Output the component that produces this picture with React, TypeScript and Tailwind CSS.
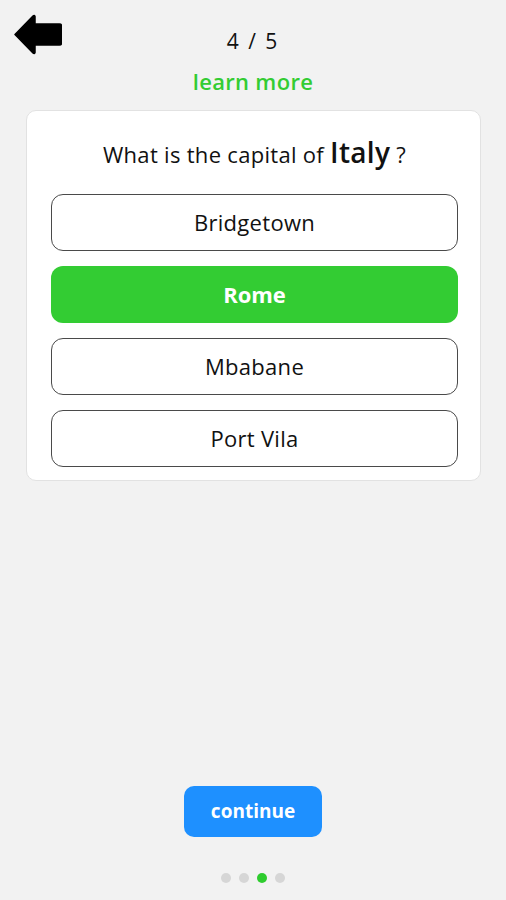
import React from "react";

const options = ["Bridgetown", "Rome", "Mbabane", "Port Vila"];
const correct = "Rome";

function BackArrow() {
  return (
    <svg width="48" height="41" viewBox="0 0 48 41" aria-hidden>
      <path
        d="M1 20.5 L19 2 Q20.5 0.8 21 2.5 L21 10 L45.5 10 Q47.5 10 47.5 12 L47.5 29 Q47.5 31 45.5 31 L21 31 L21 38.5 Q20.5 40.2 19 39 Z"
        fill="#000"
        stroke="#000"
        strokeWidth="1.5"
        strokeLinejoin="round"
      />
    </svg>
  );
}

export default function App() {
  return (
    <div
      className="flex h-[900px] w-full flex-col bg-[#f2f2f2] text-[#111]"
      style={{ fontFamily: '"Open Sans", "Lato", sans-serif' }}
    >
      {/* Header */}
      <div className="grid grid-cols-[1fr_auto_1fr] items-start px-[14px] pt-[14px]">
        <button className="justify-self-start">
          <BackArrow />
        </button>
        <div className="flex flex-col items-center">
          <span className="mt-[13px] text-[21px] leading-[28px] tracking-[2px]">4 / 5</span>
          <a href="#" className="mt-[13px] text-[22px] leading-[26px] font-semibold tracking-[0.3px] text-[#33cc33]">
            learn more
          </a>
        </div>
        <div />
      </div>

      {/* Card */}
      <div className="ml-[26px] mr-[25px] mt-[16px] rounded-[10px] border border-[#e2e2e2] bg-white pb-[13px] pl-[24px] pr-[22px] pt-[24px]">
        <p className="text-center text-[22px] leading-[34px] tracking-[0.3px]">
          What is the capital of <span className="text-[28px] font-semibold">Italy</span> ?
        </p>
        <div className="mt-[23px] flex flex-col gap-[15px]">
          {options.map((o) =>
            o === correct ? (
              <button
                key={o}
                className="h-[57px] rounded-[12px] bg-[#33cc33] text-[22px] font-bold text-white"
              >
                {o}
              </button>
            ) : (
              <button
                key={o}
                className="h-[57px] rounded-[12px] border border-[#4a4a4a] bg-white text-[22px] tracking-[0.3px]"
              >
                {o}
              </button>
            )
          )}
        </div>
      </div>

      <div className="flex-1" />

      {/* Footer */}
      <div className="flex flex-col items-center pb-[17px]">
        <button className="h-[51px] w-[138px] rounded-[10px] bg-[#1e90ff] text-[19px] font-bold text-white">
          continue
        </button>
        <div className="mt-[36px] flex gap-[8px]">
          <span className="h-[10px] w-[10px] rounded-full bg-[#d6d6d6]" />
          <span className="h-[10px] w-[10px] rounded-full bg-[#d6d6d6]" />
          <span className="h-[10px] w-[10px] rounded-full bg-[#2ecc2e]" />
          <span className="h-[10px] w-[10px] rounded-full bg-[#d6d6d6]" />
        </div>
      </div>
    </div>
  );
}
